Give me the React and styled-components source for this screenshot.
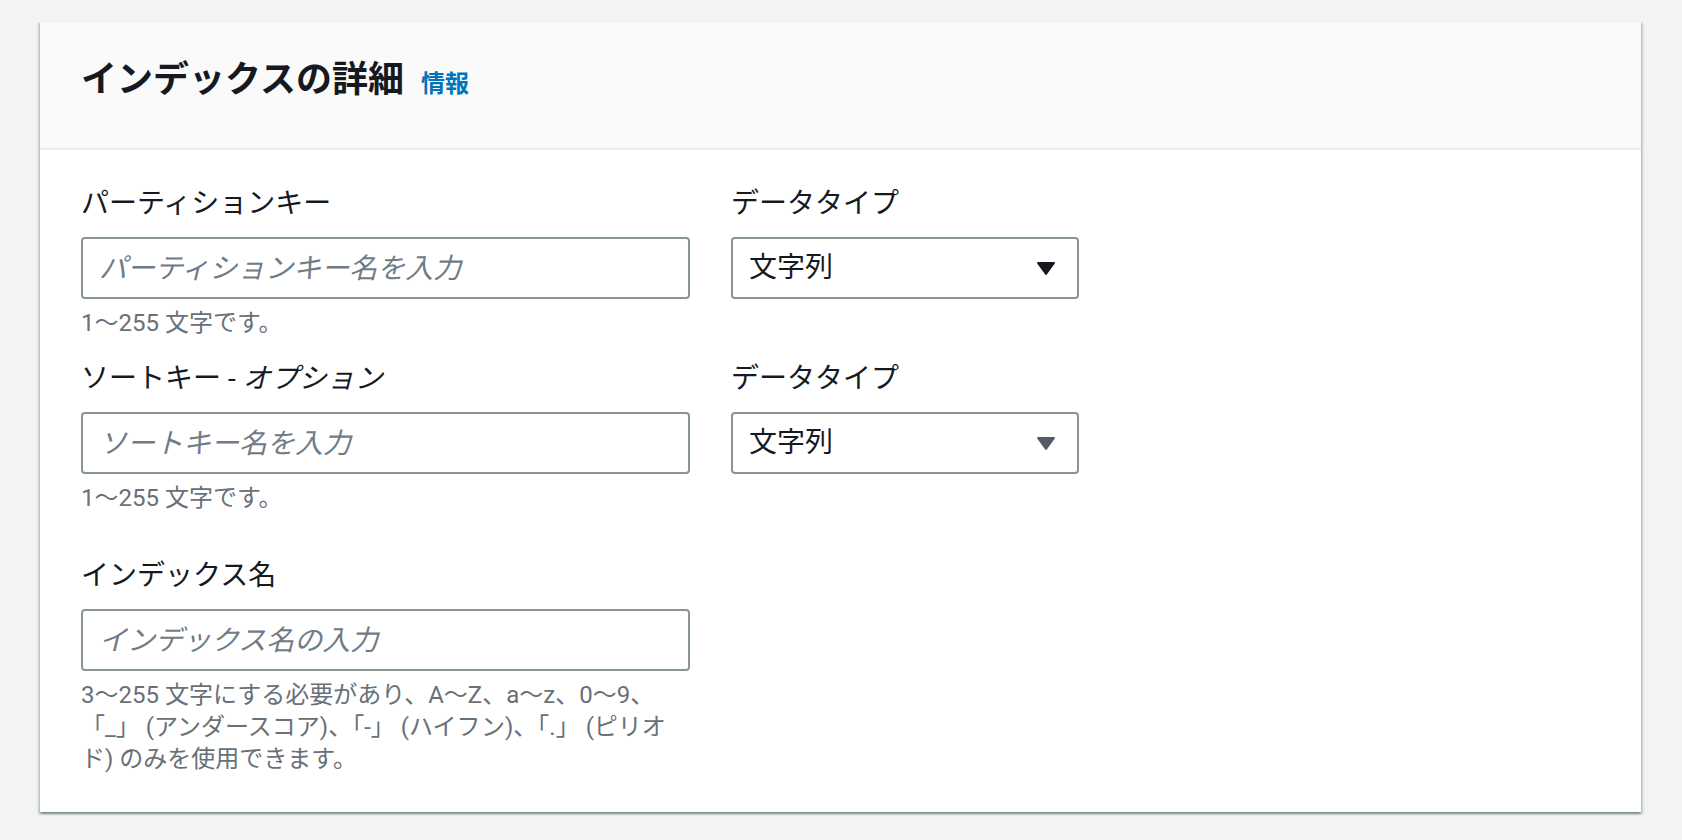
import React from "react";
import styled, { createGlobalStyle } from "styled-components";

const GlobalStyle = createGlobalStyle`
  *, *::before, *::after { box-sizing: border-box; }
  html, body { margin: 0; padding: 0; }
  body {
    background: #f2f3f3;
    font-family: Roboto, "Noto Sans CJK JP", sans-serif;
    color: #16191f;
    min-height: 100vh;
  }
`;

const Page = styled.div`
  padding: 21px 41px 28px 40px;
`;

const Card = styled.section`
  background: #ffffff;
  border-top: 1px solid #eaeded;
  box-shadow: 0 2px 2px 0 rgba(0, 28, 36, 0.3),
    2px 2px 2px 0 rgba(0, 28, 36, 0.15),
    -2px 2px 2px 0 rgba(0, 28, 36, 0.15);
`;

const Header = styled.header`
  background: #fafafa;
  border-bottom: 2px solid #eaeded;
  padding: 34px 40px 44px 41px;
  display: flex;
  align-items: baseline;
  gap: 17px;
`;

const Title = styled.h2`
  margin: 0;
  font-size: 36px;
  line-height: 48px;
  font-weight: 700;
  color: #16191f;
`;

const InfoLink = styled.a`
  font-size: 24px;
  line-height: 32px;
  font-weight: 700;
  color: #0073bb;
  text-decoration: none;
  cursor: pointer;
`;

const Body = styled.div`
  padding: 32px 40px 37px 41px;
  display: flex;
  flex-direction: column;
  gap: 40px;
`;

const KeyGrid = styled.div`
  display: grid;
  grid-template-columns: 609px 348px;
  column-gap: 41px;
  row-gap: 18px;
  align-items: start;
`;

const Field = styled.div`
  display: flex;
  flex-direction: column;
  width: ${(p) => p.$width || "auto"};
`;

const Label = styled.label`
  font-size: 28px;
  line-height: 44px;
  font-weight: 400;
  color: #16191f;
  margin-bottom: 11px;
`;

const Optional = styled.i`
  font-style: italic;
`;

const TextInput = styled.input`
  display: block;
  width: 100%;
  height: 62px;
  border: 2px solid #879596;
  border-radius: 4px;
  background: #ffffff;
  padding: 0 16px;
  font-family: Roboto, "Noto Sans CJK JP", sans-serif;
  font-size: 28px;
  color: #16191f;
  outline: none;
  &::placeholder {
    color: #707b85;
    font-style: italic;
  }
`;

const Hint = styled.div`
  margin-top: 8px;
  font-size: 24px;
  line-height: 32px;
  color: #687078;
  white-space: nowrap;
`;

const Select = styled.div`
  height: 62px;
  border: 2px solid #879596;
  border-radius: 4px;
  background: #ffffff;
  padding: 0 21px 0 16px;
  display: flex;
  align-items: center;
  justify-content: space-between;
  font-size: 28px;
  color: #16191f;
  cursor: pointer;
`;

const SelectValue = styled.span`
  line-height: 40px;
`;

const Caret = ({ color }) => (
  <svg width="20" height="15" viewBox="0 0 20 15" aria-hidden="true">
    <polygon
      points="2,2 18,2 10,13"
      fill={color}
      stroke={color}
      strokeWidth="2"
      strokeLinejoin="round"
    />
  </svg>
);

const TypeSelect = ({ value, caret }) => (
  <Select>
    <SelectValue>{value}</SelectValue>
    <Caret color={caret} />
  </Select>
);

export default function App() {
  return (
    <>
      <GlobalStyle />
      <Page>
        <Card>
          <Header>
            <Title>インデックスの詳細</Title>
            <InfoLink>情報</InfoLink>
          </Header>
          <Body>
            <KeyGrid>
              <Field>
                <Label>パーティションキー</Label>
                <TextInput placeholder="パーティションキー名を入力" />
                <Hint>1〜255 文字です。</Hint>
              </Field>
              <Field>
                <Label>データタイプ</Label>
                <TypeSelect value="文字列" caret="#16191f" />
              </Field>
              <Field>
                <Label>
                  ソートキー - <Optional>オプション</Optional>
                </Label>
                <TextInput placeholder="ソートキー名を入力" />
                <Hint>1〜255 文字です。</Hint>
              </Field>
              <Field>
                <Label>データタイプ</Label>
                <TypeSelect value="文字列" caret="#545b64" />
              </Field>
            </KeyGrid>
            <Field $width="609px">
              <Label>インデックス名</Label>
              <TextInput placeholder="インデックス名の入力" />
              <Hint>
                3〜255 文字にする必要があり、A〜Z、a〜z、0〜9、
                <br />
                「_」 (アンダースコア)、「-」 (ハイフン)、「.」 (ピリオ
                <br />
                ド) のみを使用できます。
              </Hint>
            </Field>
          </Body>
        </Card>
      </Page>
    </>
  );
}
